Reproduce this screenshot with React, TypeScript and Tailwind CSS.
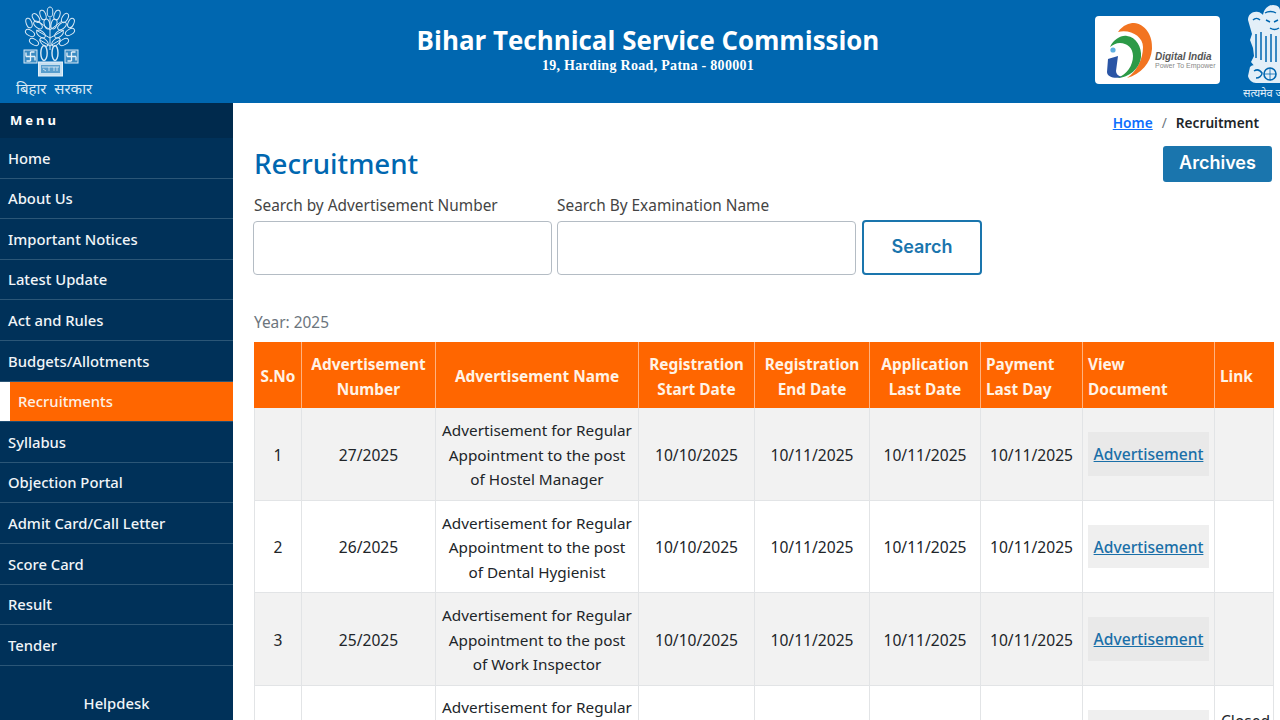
import React from 'react';

const menuItems = [
  'Home',
  'About Us',
  'Important Notices',
  'Latest Update',
  'Act and Rules',
  'Budgets/Allotments',
  'Recruitments',
  'Syllabus',
  'Objection Portal',
  'Admit Card/Call Letter',
  'Score Card',
  'Result',
  'Tender',
];

const rows = [
  { sno: 1, num: '27/2025', post: 'Hostel Manager' },
  { sno: 2, num: '26/2025', post: 'Dental Hygienist' },
  { sno: 3, num: '25/2025', post: 'Work Inspector' },
  { sno: 4, num: '24/2025', post: 'Junior Engineer', link: 'Closed Link' },
];

// x, y, angle of each leaf on the tree
const leaves = [
  [50, 12, 0], [43, 15, -20], [57, 15, 20], [36, 18, -35], [65, 18, 30],
  [29, 23, -20], [71, 23, 25], [38, 25, -50], [47, 24, -15], [54, 24, 15], [62, 26, 50],
  [30, 33, -60], [41, 34, -50], [59, 34, 50], [70, 32, 60],
  [34, 42, -60], [44, 42, -45], [56, 42, 45], [64, 42, 60],
];

const Swastika = ({ x }: { x: number }) => (
  <g>
    <rect x={x} y="50" width="13" height="13" fill="#a9cde6" fillOpacity="0.35" stroke="#d7e8f5" strokeWidth="1" />
    <path
      d={`M${x + 6.5} 52v9M${x + 2} 56.5h9M${x + 6.5} 52h4M${x + 6.5} 61h-4M${x + 2} 56.5v-4M${x + 11} 56.5v4`}
      stroke="#e6f1f9"
      strokeWidth="1.3"
      fill="none"
    />
  </g>
);

const BiharEmblem = () => (
  <svg viewBox="20 5 62 73" className="w-[62px] h-[73px]" fill="none" stroke="#d7e8f5" strokeWidth="1">
    <path d="M50 18v32M50 30l-12-9M50 30l12-9M50 38l-14-8M50 38l14-8M50 46l-10-6M50 46l10-6" />
    {leaves.map(([x, y, a]) => (
      <ellipse key={`${x}-${y}`} cx={x} cy={y} rx="2.8" ry="5" transform={`rotate(${a} ${x} ${y})`} />
    ))}
    <ellipse cx="44" cy="53" rx="3.2" ry="7.5" strokeWidth="1.4" />
    <ellipse cx="55" cy="53" rx="3" ry="7.5" strokeWidth="1.4" />
    <Swastika x={24} />
    <Swastika x={65} />
    <rect x="38.5" y="62" width="24" height="14" fill="#c6dff0" stroke="#e3f0f9" />
    <rect x="41" y="65" width="19" height="8" fill="#0067b0" fillOpacity="0.55" stroke="none" />
    <path d="M42 67h17M43 69l3 2M49 67v4M54 67v4M57 67v4" stroke="#e3f0f9" strokeWidth="0.8" />
  </svg>
);

const DigitalIndiaLogo = () => (
  <svg viewBox="0 0 50 60" className="w-[50px] h-[60px] shrink-0 mt-[2px]">
    <path d="M13 11C18 4 24 2 29 2 40 3 48 14 47 28 46 42 36 53 22 57 32 50 38 38 38 26 38 16 26 8 13 11z" fill="#f27421" />
    <path d="M5 26C9 18 16 14 22 15 31 16 37 26 36 36 35 47 24 57 12 57 22 54 28 44 28 35 28 27 22 22 15 22 11 22 8 24 5 26z" fill="#2c9a47" />
    <circle cx="8" cy="29" r="2.6" fill="#5fb0e0" />
    <path d="M3 38C6 37 10 36 13 35L11 50C11 53 13 55 17 56 10 58 2 56 2 51z" fill="#2a55a5" />
  </svg>
);

const AshokaEmblem = () => (
  <svg viewBox="1243 0 37 85" className="w-[37px] h-[85px]" fill="#e3eff8">
    <path d="M1248 20c0-6 5-9 10-8 2 0 4 2 5 3 1-6 5-10 10-10s7 3 7 5v58h-24l-5-6 3-6-1-8-3-8 2-6z" />
    <path d="M1253 20c2-2 5-2 7 0M1265 13c3-2 8-2 11 0M1266 20l4 2M1274 22l4-2M1270 28c3 2 6 2 9 0" fill="none" stroke="#0067b0" strokeWidth="1.4" />
    <path d="M1256 34v24M1261 32v28M1266 36v26M1271 34v28M1276 36v26" fill="none" stroke="#0067b0" strokeWidth="1.5" />
    <path d="M1250 67c2-2 4-2 6-2h24v18h-24c-4 0-7-3-8-7z" />
    <circle cx="1270" cy="74" r="6" fill="none" stroke="#0067b0" strokeWidth="1.6" />
    <path d="M1270 68v12M1264 74h12" stroke="#0067b0" strokeWidth="0.8" />
    <path d="M1254 71c3-2 6-1 8 2 0 3-3 5-6 5" fill="none" stroke="#0067b0" strokeWidth="1.5" />
  </svg>
);

const App = () => {
  return (
    <div className="h-screen w-full overflow-hidden bg-white font-['Noto_Sans',sans-serif] text-[#212529]">
      <header className="relative h-[103px] bg-[#0067b0] flex items-start justify-between">
        <div className="w-[233px] pl-[16px] pt-[5px] text-[#d7e8f5]">
          <div className="pl-[4px]">
            <BiharEmblem />
          </div>
          <div className="text-[15px] leading-[18px] [word-spacing:4px] whitespace-nowrap mt-[1px]">बिहार सरकार</div>
        </div>
        <div className="absolute left-0 right-0 top-[22px] text-center text-white pl-[16px]">
          <h1 className="font-['Open_Sans',sans-serif] font-bold text-[25.9px] leading-[36px]">Bihar Technical Service Commission</h1>
          <p className="font-['Liberation_Serif',serif] font-bold text-[14px] leading-[16px] tracking-[0.3px]">19, Harding Road, Patna - 800001</p>
        </div>
        <div className="flex items-start">
          <div className="mt-[16px] w-[125px] h-[68px] bg-white rounded-[4px] flex items-center pl-[10px]">
            <DigitalIndiaLogo />
            <div className="mt-[22px] whitespace-nowrap">
              <div className="font-['Liberation_Sans',sans-serif] italic font-bold text-[10px] leading-[10px] text-[#555]">Digital India</div>
              <div className="font-['Liberation_Sans',sans-serif] text-[7px] leading-[8px] text-[#888]">Power To Empower</div>
            </div>
          </div>
          <div className="ml-[23px] w-[37px] overflow-hidden">
            <AshokaEmblem />
            <div className="text-[11px] leading-[12px] text-[#e3f0f9] whitespace-nowrap mt-[2px]">सत्यमेव जयते</div>
          </div>
        </div>
      </header>
      <div className="flex">
        <aside className="w-[233px] shrink-0 bg-[#003159] h-[617px] text-[#f1f5f8]">
          <div className="bg-[#002a4d] h-[35px] pl-[10px] pt-[7px] text-[13px] leading-[20px] font-bold tracking-[3px] text-white">Menu</div>
          <nav className="flex flex-col">
            {menuItems.map((item) =>
              item === 'Recruitments' ? (
                <div key={item} className="h-[40.6px] bg-white pl-[10px] border-b border-[#1f4f75]">
                  <div className="h-full bg-[#ff6600] pl-[8px] flex items-center text-[14.8px] font-medium text-[#fdf1e6]">{item}</div>
                </div>
              ) : (
                <a key={item} className="h-[40.6px] pl-[8px] flex items-center text-[14.8px] font-medium border-b border-[#2b5677]">{item}</a>
              ),
            )}
          </nav>
          <div className="text-center text-[14.8px] font-medium mt-[26px]">Helpdesk</div>
        </aside>
        <main className="flex-1 min-w-0 pl-[20px] pr-[8px]">
          <div className="flex justify-end items-center h-[40px] pr-[13px] text-[13.7px] font-semibold">
            <a className="text-[#0d6efd] underline">Home</a>
            <span className="mx-[9px] text-[#6c757d] font-normal">/</span>
            <span className="text-[#212529]">Recruitment</span>
          </div>
          <div className="flex justify-between items-start">
            <h2 className="pl-[1px] text-[27.7px] leading-[40px] font-medium text-[#0067b0]">Recruitment</h2>
            <button className="mt-[3px] w-[109px] h-[36px] bg-[#1a75ad] text-white rounded-[3px] font-['Inter',sans-serif] font-semibold text-[18px] leading-[32px] pb-[2px]">Archives</button>
          </div>
          <div className="flex items-end gap-[5px] mt-[11px]">
            <label className="block w-[299px]">
              <span className="block pl-[1px] text-[15.4px] leading-[24px] mb-[3px] text-[#444]">Search by Advertisement Number</span>
              <input className="block w-full h-[54px] border border-[#b4bcc4] rounded-[4px] bg-white" />
            </label>
            <label className="block w-[299px]">
              <span className="block text-[15.4px] leading-[24px] mb-[3px] text-[#444]">Search By Examination Name</span>
              <input className="block w-full h-[54px] border border-[#b4bcc4] rounded-[4px] bg-white" />
            </label>
            <button className="ml-[1px] w-[120px] h-[55px] border-2 border-[#1a75ad] rounded-[4px] text-[#1a75ad] font-['Inter',sans-serif] font-semibold text-[18px] pb-[3px]">Search</button>
          </div>
          <p className="pl-[1px] mt-[35px] text-[15.4px] leading-[24px] text-[#6c757d] translate-y-[1px]">Year: 2025</p>
          <table className="mt-[8px] ml-[1px] w-[1019px] table-fixed border-collapse text-[15.6px] leading-[24.6px]">
            <colgroup>
              <col className="w-[47px]" />
              <col className="w-[134px]" />
              <col className="w-[203px]" />
              <col className="w-[116px]" />
              <col className="w-[115px]" />
              <col className="w-[111px]" />
              <col className="w-[102px]" />
              <col className="w-[132px]" />
              <col className="w-[59px]" />
            </colgroup>
            <thead>
              <tr className="bg-[#ff6600] text-[#fff3e6] h-[66px] text-[15.4px]">
                <th className="border-l border-r border-l-[#ff6600] border-r-[#ffb27f] font-bold pt-[5px]">S.No</th>
                <th className="border-r border-[#ffb27f] font-bold pt-[5px]">Advertisement<br />Number</th>
                <th className="border-r border-[#ffb27f] font-bold pt-[5px]">Advertisement Name</th>
                <th className="border-r border-[#ffb27f] font-bold pt-[5px]">Registration<br />Start Date</th>
                <th className="border-r border-[#ffb27f] font-bold pt-[5px]">Registration<br />End Date</th>
                <th className="border-r border-[#ffb27f] font-bold pt-[5px]">Application<br />Last Date</th>
                <th className="border-r border-[#ffb27f] font-bold text-left pl-[5px] pt-[5px]">Payment<br />Last Day</th>
                <th className="border-r border-[#ffb27f] font-bold text-left pl-[5px] pt-[5px]">View<br />Document</th>
                <th className="font-bold text-left pl-[5px] pt-[5px]">Link</th>
              </tr>
            </thead>
            <tbody>
              {rows.map((row) => (
                <tr key={row.sno} className={row.sno % 2 === 1 ? 'bg-[#f2f2f2] text-center h-[92.4px]' : 'bg-white text-center h-[92.4px]'}>
                  <td className="border border-[#e2e4e6] border-t-0 pt-[2px]">{row.sno}</td>
                  <td className="border border-[#e2e4e6] border-t-0 pt-[2px]">{row.num}</td>
                  <td className="border border-[#e2e4e6] border-t-0 whitespace-nowrap text-[15.3px] pt-[2px]">
                    Advertisement for Regular
                    <br />
                    Appointment to the post
                    <br />
                    of {row.post}
                  </td>
                  <td className="border border-[#e2e4e6] border-t-0 pt-[2px]">10/10/2025</td>
                  <td className="border border-[#e2e4e6] border-t-0 pt-[2px]">10/11/2025</td>
                  <td className="border border-[#e2e4e6] border-t-0 pt-[2px]">10/11/2025</td>
                  <td className="border border-[#e2e4e6] border-t-0 pt-[2px]">10/11/2025</td>
                  <td className="border border-[#e2e4e6] border-t-0 px-[5px]">
                    <a className={row.sno % 2 === 1 ? 'block pt-[10px] pb-[9px] bg-[#e9e9e9] text-[#1a6fa8] underline font-medium' : 'block pt-[10px] pb-[9px] bg-[#efefef] text-[#1a6fa8] underline font-medium'}>
                      Advertisement
                    </a>
                  </td>
                  <td className="border border-[#e2e4e6] border-t-0 text-left pl-[6px] pt-[5px]">{row.link}</td>
                </tr>
              ))}
            </tbody>
          </table>
        </main>
      </div>
    </div>
  );
};

export default App;
